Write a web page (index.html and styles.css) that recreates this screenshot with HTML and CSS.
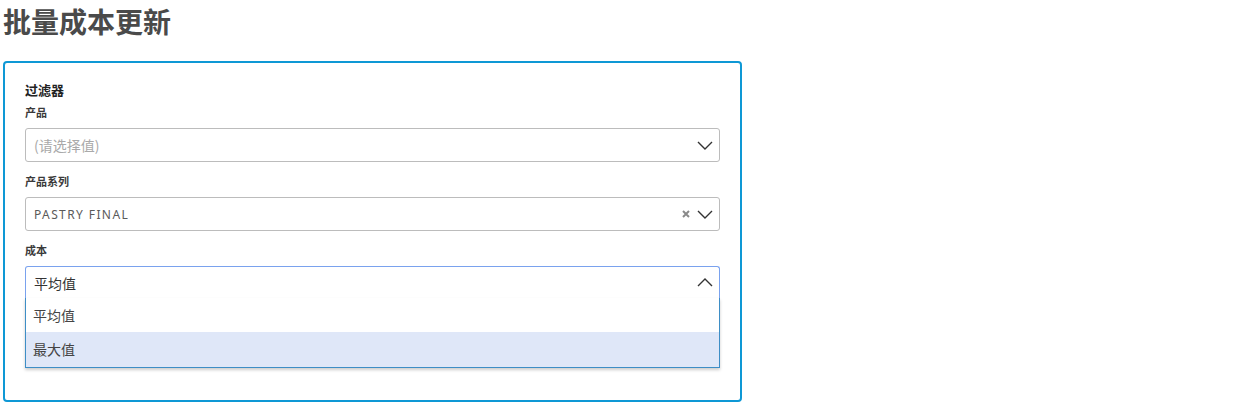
FILE: index.html
```html
<!DOCTYPE html>
<html lang="zh">
<head>
<meta charset="utf-8">
<title>批量成本更新</title>
<link rel="stylesheet" href="styles.css">
</head>
<body>
<h1 class="page-title">批量成本更新</h1>
<section class="card">
  <h2 class="card-heading">过滤器</h2>
  <div class="field">
    <div class="field-label">产品</div>
    <div class="select">
      <span class="select-value placeholder">(请选择值)</span>
      <span class="select-icons">
        <svg class="chevron" width="16" height="9" viewBox="0 0 16 9"><path d="M1 1 L8 8 L15 1" fill="none" stroke="#333" stroke-width="1.4"/></svg>
      </span>
    </div>
  </div>
  <div class="field">
    <div class="field-label">产品系列</div>
    <div class="select">
      <span class="select-value upper">PASTRY FINAL</span>
      <span class="select-icons">
        <svg class="clear" width="8" height="8" viewBox="0 0 8 8"><path d="M1 1 L7 7 M7 1 L1 7" fill="none" stroke="#8a8a8a" stroke-width="2"/></svg>
        <svg class="chevron" width="16" height="9" viewBox="0 0 16 9"><path d="M1 1 L8 8 L15 1" fill="none" stroke="#333" stroke-width="1.4"/></svg>
      </span>
    </div>
  </div>
  <div class="field">
    <div class="field-label">成本</div>
    <div class="select-wrap">
      <div class="select open">
        <span class="select-value">平均值</span>
        <span class="select-icons">
          <svg class="chevron" width="16" height="9" viewBox="0 0 16 9"><path d="M1 8 L8 1 L15 8" fill="none" stroke="#333" stroke-width="1.4"/></svg>
        </span>
      </div>
      <ul class="menu">
        <li class="menu-item">平均值</li>
        <li class="menu-item active">最大值</li>
      </ul>
    </div>
  </div>
</section>
</body>
</html>
```

FILE: styles.css
```css
* { box-sizing: border-box; }
body {
  margin: 0;
  padding: 0 0 0 3px;
  font-family: "Noto Sans", "Noto Sans CJK SC", sans-serif;
  color: #333;
  background: #fff;
}
.page-title {
  margin: 0;
  padding-top: 4px;
  height: 61px;
  font-size: 28px;
  line-height: 34px;
  font-weight: 700;
  color: #4a4a4a;
  font-family: "Noto Sans CJK SC", sans-serif;
}
.card {
  width: 739px;
  height: 341px;
  border: 2px solid #0e98d5;
  border-radius: 4px;
  padding: 17px 20px 0 20px;
}
.card-heading {
  margin: 0 0 5px;
  font-size: 13px;
  line-height: 20px;
  font-weight: 700;
  color: #222;
  font-family: "Noto Sans CJK SC", sans-serif;
}
.field { margin-bottom: 12px; }
.field-label {
  font-size: 11px;
  line-height: 15px;
  font-weight: 700;
  color: #3a3a3a;
  margin-bottom: 8px;
  font-family: "Noto Sans CJK SC", sans-serif;
}
.select {
  height: 34px;
  border: 1px solid #bcbcbc;
  border-radius: 3px;
  display: flex;
  align-items: center;
  justify-content: space-between;
  padding: 0 6px 0 8px;
  background: #fff;
}
.select-value {
  font-size: 14px;
  color: #333;
  font-family: "Noto Sans CJK SC", sans-serif;
}
.select-value.placeholder { color: #a9a9a9; }
.select-value.upper {
  font-family: "Noto Sans", sans-serif;
  font-size: 12px;
  letter-spacing: 1.4px;
  color: #5a5a5a;
}
.select-icons {
  display: flex;
  align-items: center;
  gap: 7px;
}
.chevron { display: block; }
.clear { display: block; }
.select-wrap { position: relative; }
.select.open {
  height: 32px;
  border-color: #7aa2ee;
  border-bottom: none;
  border-radius: 3px 3px 0 0;
}
.menu {
  position: absolute;
  left: 0;
  right: 0;
  top: 32px;
  margin: 0;
  padding: 0;
  list-style: none;
  background: #fff;
  border: 1px solid #3e8ec6;
  border-top: none;
  box-shadow: 0 2px 3px rgba(0,0,0,0.2);
}
.menu-item {
  height: 34px;
  line-height: 34px;
  padding-left: 7px;
  font-size: 14px;
  color: #444;
  font-family: "Noto Sans CJK SC", sans-serif;
}
.menu-item.active {
  background: #dfe7f8;
  height: 35px;
}
```
